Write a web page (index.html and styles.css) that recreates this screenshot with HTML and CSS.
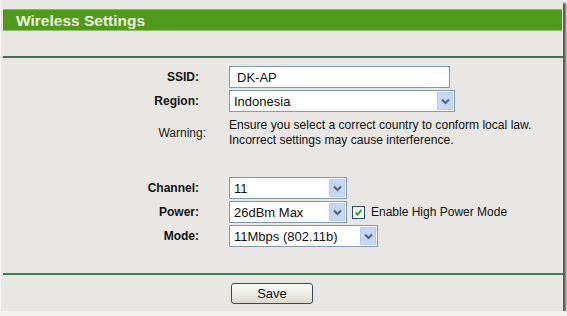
FILE: index.html
```html
<!DOCTYPE html>
<html lang="en">
  <head>
    <meta charset="UTF-8" />
    <title>Wireless Settings</title>
    <link rel="stylesheet" href="styles.css">
  </head>
  <body>
    <div class="frame">
      <div class="title-bar">Wireless Settings</div>
      <div class="spacer"></div>
      <div class="divider"></div>

      <form class="settings-form" onsubmit="return false">
        <div class="form-row">
          <label class="item">SSID:</label>
          <input class="text-input ssid" type="text" value="DK-AP" />
        </div>
        <div class="form-row">
          <label class="item">Region:</label>
          <div class="select-wrap region">
            <select><option>Indonesia</option></select>
            <span class="arrow"><svg width="9" height="7" viewBox="0 0 9 7"><path d="M1 1.5 L4.5 5 L8 1.5" fill="none" stroke="#4d6185" stroke-width="2"/></svg></span>
          </div>
        </div>
        <div class="form-row warning-row">
          <label class="item plain">Warning:</label>
          <p class="warning-text">Ensure you select a correct country to conform local law.<br />Incorrect settings may cause interference.</p>
        </div>

        <div class="form-row channel-row">
          <label class="item">Channel:</label>
          <div class="select-wrap channel">
            <select><option>11</option></select>
            <span class="arrow"><svg width="9" height="7" viewBox="0 0 9 7"><path d="M1 1.5 L4.5 5 L8 1.5" fill="none" stroke="#4d6185" stroke-width="2"/></svg></span>
          </div>
        </div>
        <div class="form-row">
          <label class="item">Power:</label>
          <div class="select-wrap channel">
            <select><option>26dBm Max</option></select>
            <span class="arrow"><svg width="9" height="7" viewBox="0 0 9 7"><path d="M1 1.5 L4.5 5 L8 1.5" fill="none" stroke="#4d6185" stroke-width="2"/></svg></span>
          </div>
          <label class="check">
            <span class="box"><svg width="9" height="9" viewBox="0 0 9 9"><path d="M1.5 4.5 L3.5 6.8 L7.5 1.8" fill="none" stroke="#21a121" stroke-width="1.8"/></svg></span>
            Enable High Power Mode
          </label>
        </div>
        <div class="form-row">
          <label class="item">Mode:</label>
          <div class="select-wrap mode">
            <select><option>11Mbps (802.11b)</option></select>
            <span class="arrow"><svg width="9" height="7" viewBox="0 0 9 7"><path d="M1 1.5 L4.5 5 L8 1.5" fill="none" stroke="#4d6185" stroke-width="2"/></svg></span>
          </div>
        </div>
      </form>

      <div class="divider bottom"></div>
      <div class="button-row">
        <button class="save-btn" type="button">Save</button>
      </div>
    </div>
  </body>
</html>
```

FILE: styles.css
```css
body {
  margin: 0;
  background-color: #f3f2f0;
  font-family: "Liberation Sans", Arial, sans-serif;
}

.frame {
  width: 562px;
  height: 302px;
  padding-top: 9px;
  background-color: #e9e7e4;
  box-shadow: 3px 3px 2px #5d5b58;
  border-left: 1px solid #f6f5f3;
}

.title-bar {
  margin: 0 1px 0 2px;
  height: 22px;
  line-height: 21px;
  padding-left: 13px;
  background-color: #4f9a1c;
  border-top: 1px solid #7fbf4c;
  border-bottom: 1px solid #8cc35c;
  box-sizing: border-box;
  color: #eaf5dc;
  font-size: 15.5px;
  font-weight: bold;
}

.spacer {
  height: 25px;
}

.divider {
  margin-left: 2px;
  height: 2px;
  background-color: #476c55;
}

.divider.bottom {
  background-color: #3f7b53;
  height: 2px;
}

.settings-form {
  margin: 0;
  padding: 8px 0 26px;
  display: flex;
  flex-direction: column;
  gap: 2px;
}

.form-row {
  display: flex;
  align-items: center;
  gap: 30px;
  height: 22px;
}

.item {
  width: 198px;
  text-align: right;
  font-size: 12px;
  font-weight: bold;
  color: #111;
}

.item.plain {
  font-weight: normal;
  width: 205px;
  margin-right: -7px;
  color: #222;
}

.warning-row {
  height: 30px;
  margin-top: 4px;
}

.channel-row {
  margin-top: 27px;
}

.warning-text {
  margin: 0;
  font-size: 12.1px;
  line-height: 15px;
  color: #111;
}

.text-input {
  height: 22px;
  box-sizing: border-box;
  border: 1px solid #7f9db9;
  background-color: #fff;
  padding: 0 7px;
  font-family: inherit;
  font-size: 13px;
  color: #111;
  outline: none;
}

.ssid {
  width: 221px;
}

.select-wrap {
  position: relative;
  height: 22px;
}

.select-wrap select {
  width: 100%;
  height: 22px;
  box-sizing: border-box;
  appearance: none;
  -webkit-appearance: none;
  border: 1px solid #7f9db9;
  border-radius: 0;
  background-color: #fff;
  padding: 0 4px;
  font-family: inherit;
  font-size: 13px;
  color: #111;
}

.select-wrap .arrow {
  position: absolute;
  top: 2px;
  right: 2px;
  width: 16px;
  height: 18px;
  box-sizing: border-box;
  border: 1px solid #b9cbf2;
  border-radius: 1px;
  background-color: #c7d7fa;
  display: flex;
  align-items: center;
  justify-content: center;
}

.region {
  width: 226px;
}

.channel {
  width: 118px;
}

.mode {
  width: 149px;
}

.check {
  margin-left: -25px;
  display: flex;
  align-items: center;
  gap: 6px;
  font-size: 12px;
  color: #111;
}

.check .box {
  width: 13px;
  height: 13px;
  box-sizing: border-box;
  border: 1px solid #1e4f7e;
  background-color: #fff;
  display: flex;
  align-items: center;
  justify-content: center;
}

.button-row {
  padding: 8px 0 0 230px;
}

.save-btn {
  width: 82px;
  height: 21px;
  border: 1px solid #3b4a5e;
  border-radius: 3px;
  background: linear-gradient(#fbfbf8, #ecebe5 60%, #d9d6cc);
  font-family: inherit;
  font-size: 13px;
  color: #111;
  padding: 0;
}
```
